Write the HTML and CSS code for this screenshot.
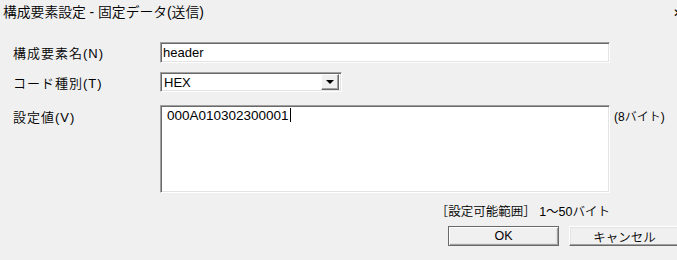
FILE: index.html
```html
<!DOCTYPE html>
<html lang="ja">
<head>
  <meta charset="UTF-8">
  <title>構成要素設定 - 固定データ(送信)</title>
  <link rel="stylesheet" href="styles.css">
</head>
<body>
  <div class="dlg">
    <div class="titlebar">
      <span class="caption">構成要素設定 - 固定データ(送信)</span>
      <span class="close">✕</span>
    </div>

    <div class="form">
      <label class="lbl">構成要素名(N)</label>
      <div class="field"><input class="edit" type="text" value="header"></div>
      <div></div>

      <label class="lbl">コード種別(T)</label>
      <div class="combo">
        <span class="combo-text">HEX</span>
        <span class="combo-btn"><span class="arrow"></span></span>
      </div>
      <div></div>

      <label class="lbl row3">設定値(V)</label>
      <div class="memo row3">000A010302300001<span class="caret"></span></div>
      <div class="unit row3">(8バイト)</div>

      <div></div>
      <div class="range">［設定可能範囲］ 1～50バイト</div>
      <div></div>
    </div>

    <div class="buttons">
      <button class="btn btn-default">OK</button>
      <button class="btn">キャンセル</button>
    </div>
  </div>
</body>
</html>
```

FILE: styles.css
```css
html, body {
  margin: 0;
  padding: 0;
  background: #f0f0f0;
  overflow: hidden;
}

.dlg {
  width: 677px;
  height: 260px;
  font-family: "Liberation Sans", "Noto Sans CJK JP", sans-serif;
  font-size: 13px;
  font-weight: 350;
  color: #000;
}

/* title */
.titlebar {
  display: flex;
  justify-content: space-between;
  height: 27px;
  line-height: 26px;
  padding-left: 3px;
  font-size: 13.8px;
  overflow: hidden;
}

.close {
  font-size: 12px;
  margin-right: -6px;
}

/* form rows */
.form {
  display: grid;
  grid-template-columns: 147px 450px 1fr;
  padding: 15px 0 0 13px;
  row-gap: 9px;
  align-items: center;
}

.lbl {
  font-size: 13px;
  letter-spacing: 1px;
}

.row3 {
  align-self: start;
  margin-top: 4px;
}

.lbl.row3 {
  padding-top: 2px;
}

.edit {
  box-sizing: border-box;
  width: 450px;
  height: 21px;
  margin: 0;
  padding: 0 2px;
  font: inherit;
  font-size: 13px;
  border: 1px solid;
  border-color: #a0a0a0 #fff #fff #a0a0a0;
  box-shadow: inset 1px 1px #696969, inset -1px -1px #e3e3e3;
  background: #fff;
  outline: none;
}

.combo {
  box-sizing: border-box;
  display: flex;
  align-items: center;
  width: 182px;
  height: 20px;
  border: 1px solid;
  border-color: #a0a0a0 #fff #fff #a0a0a0;
  box-shadow: inset 1px 1px #696969, inset -1px -1px #e3e3e3;
  background: #fff;
}

.combo-text {
  flex: 1;
  padding-left: 3px;
}

.combo-btn {
  box-sizing: border-box;
  display: flex;
  align-items: center;
  justify-content: center;
  width: 18px;
  height: 16px;
  margin-right: 2px;
  background: #f0f0f0;
  border: 1px solid;
  border-color: #fff #696969 #696969 #fff;
  box-shadow: inset -1px -1px #a0a0a0;
}

.arrow {
  width: 0;
  height: 0;
  border-left: 4px solid transparent;
  border-right: 4px solid transparent;
  border-top: 4px solid #000;
}

.memo {
  box-sizing: border-box;
  width: 450px;
  height: 88px;
  padding: 2px 6px;
  line-height: 16px;
  font-size: 13.5px;
  border: 1px solid;
  border-color: #a0a0a0 #fff #fff #a0a0a0;
  box-shadow: inset 1px 1px #696969, inset -1px -1px #e3e3e3;
  background: #fff;
}

.caret {
  display: inline-block;
  width: 1px;
  height: 14px;
  margin-left: 1px;
  vertical-align: -2px;
  background: #000;
}

.unit {
  padding: 2px 0 0 4px;
  font-size: 12px;
}

.range {
  text-align: right;
  font-size: 12.5px;
  margin-top: -1px;
}

/* buttons */
.buttons {
  display: flex;
  justify-content: flex-end;
  gap: 10px;
  margin-top: 6px;
  margin-right: -3px;
}

.btn {
  box-sizing: border-box;
  width: 111px;
  height: 20px;
  padding: 0;
  font: inherit;
  font-size: 12.5px;
  background: #f0f0f0;
  border: 1px solid;
  border-color: #fff #696969 #696969 #fff;
  box-shadow: inset -1px -1px #a0a0a0, inset 1px 1px #e3e3e3;
}

.btn-default {
  border: 1px solid #696969;
  box-shadow: inset 1px 1px #fff, inset -1px -1px #a0a0a0, inset -2px -2px #e3e3e3;
}
```
